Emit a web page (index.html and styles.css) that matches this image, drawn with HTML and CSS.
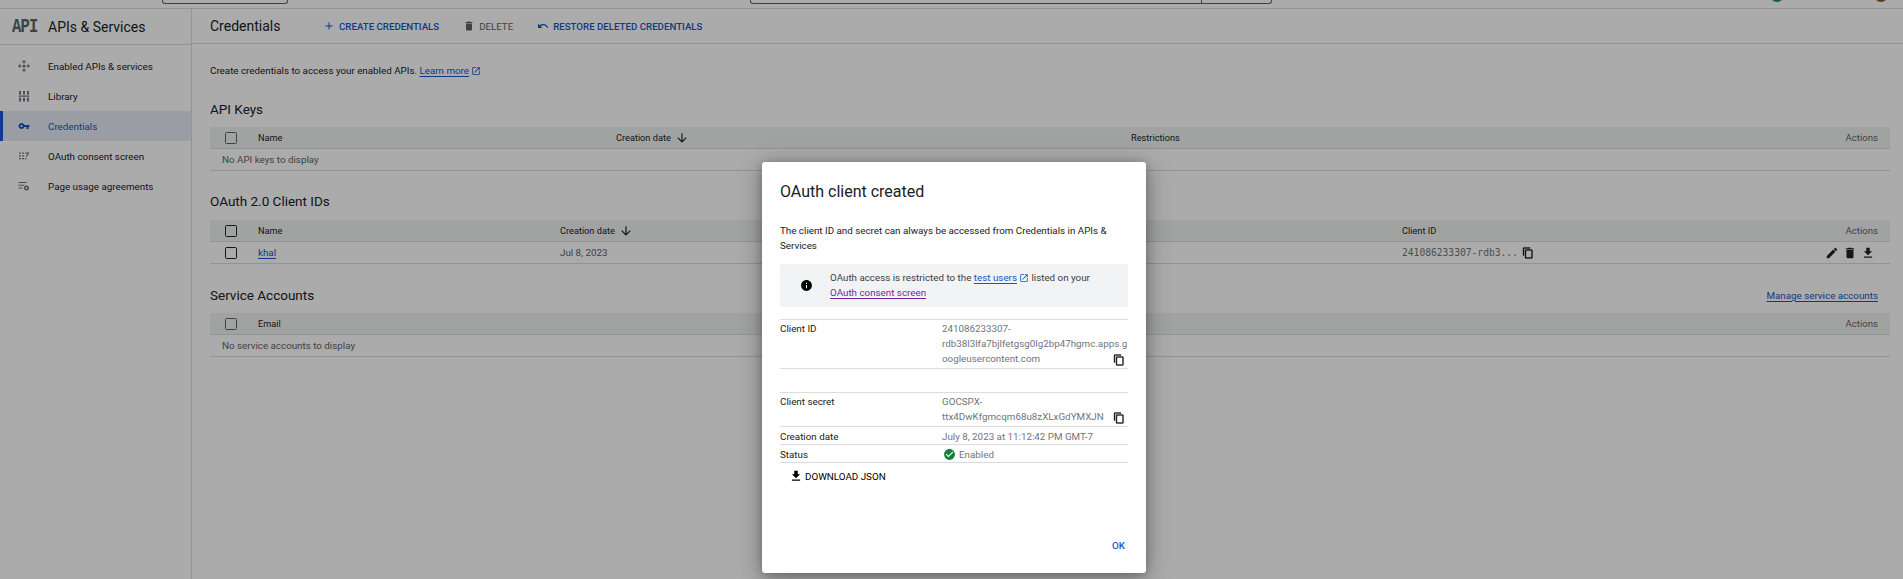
FILE: index.html
```html
<!DOCTYPE html>
<html lang="en">
<head>
<meta charset="utf-8">
<title>Credentials – APIs &amp; Services</title>
<link rel="stylesheet" href="styles.css">
</head>
<body>
<svg class="sprite" aria-hidden="true">
  <symbol id="i-plus" viewBox="0 0 24 24"><path d="M19 13h-6v6h-2v-6H5v-2h6V5h2v6h6v2z"/></symbol>
  <symbol id="i-delete" viewBox="0 0 24 24"><path d="M6 19c0 1.1.9 2 2 2h8c1.1 0 2-.9 2-2V7H6v12zM19 4h-3.500l-1-1h-5l-1 1H5v2h14V4z"/></symbol>
  <symbol id="i-undo" viewBox="0 0 24 24"><path d="M12.500 8c-2.650 0-5.050.99-6.900 2.600L2 7v9h9l-3.620-3.620c1.390-1.160 3.160-1.880 5.120-1.880 3.540 0 6.550 2.310 7.600 5.500l2.370-.78C21.080 11.030 17.150 8 12.500 8z"/></symbol>
  <symbol id="i-key" viewBox="0 0 24 24"><path d="M12.650 10C11.830 7.670 9.610 6 7 6c-3.310 0-6 2.690-6 6s2.690 6 6 6c2.610 0 4.830-1.670 5.650-4H17v4h4v-4h2v-4H12.650zM7 14c-1.100 0-2-.9-2-2s.9-2 2-2 2 .9 2 2-.9 2-2 2z"/></symbol>
  <symbol id="i-copy" viewBox="0 0 24 24"><path d="M16 1H4c-1.100 0-2 .9-2 2v14h2V3h12V1zm3 4H8c-1.100 0-2 .9-2 2v14c0 1.100.9 2 2 2h11c1.100 0 2-.9 2-2V7c0-1.100-.9-2-2-2zm0 16H8V7h11v14z"/></symbol>
  <symbol id="i-edit" viewBox="0 0 24 24"><path d="M3 17.250V21h3.750L17.810 9.940l-3.750-3.750L3 17.250zM20.710 7.040c.39-.39.39-1.020 0-1.410l-2.340-2.340c-.39-.39-1.020-.39-1.410 0l-1.830 1.830 3.750 3.750 1.830-1.830z"/></symbol>
  <symbol id="i-download" viewBox="0 0 24 24"><path d="M19 9h-4V3H9v6H5l7 7 7-7zM5 18v2h14v-2H5z"/></symbol>
  <symbol id="i-down" viewBox="0 0 24 24"><path d="M20 12l-1.410-1.410L13 16.170V4h-2v12.170l-5.580-5.590L4 12l8 8 8-8z"/></symbol>
  <symbol id="i-info" viewBox="0 0 24 24"><path d="M12 2C6.480 2 2 6.480 2 12s4.480 10 10 10 10-4.480 10-10S17.520 2 12 2zm1 15h-2v-6h2v6zm0-8h-2V7h2v2z"/></symbol>
  <symbol id="i-check" viewBox="0 0 24 24"><path d="M12 2C6.480 2 2 6.480 2 12s4.480 10 10 10 10-4.480 10-10S17.520 2 12 2zm-2 15l-5-5 1.410-1.410L10 14.170l7.590-7.590L19 8l-9 9z"/></symbol>
  <symbol id="i-open" viewBox="0 0 24 24"><path d="M19 19H5V5h7V3H5c-1.110 0-2 .9-2 2v14c0 1.100.89 2 2 2h14c1.100 0 2-.9 2-2v-7h-2v7zM14 3v2h3.590l-9.830 9.830 1.410 1.410L19 6.410V10h2V3h-7z"/></symbol>
  <symbol id="i-api" viewBox="0 0 24 24"><path d="M12 0l4.500 4.500H13v3a5 5 0 0 0-2 0v-3H7.500zM0 12l4.500-4.500V11h3a5 5 0 0 0 0 2h-3v3.500zM24 12l-4.500 4.500V13h-3a5 5 0 0 0 0-2h3V7.500zM12 24l-4.500-4.500H11v-3a5 5 0 0 0 2 0v3h3.500z"/><circle cx="12" cy="12" r="3"/></symbol>
  <symbol id="i-library" viewBox="0 0 24 24"><path d="M2 2h4v7H2zM10 2h4v7h-4zM18 2h4v7h-4zM1 11h22v2.500H1zM2 15.500h4V23H2zM10 15.500h4V23h-4zM18 15.500h4V23h-4z"/></symbol>
  <symbol id="i-consent" viewBox="0 0 24 24"><path d="M2 5h4v2.500H2zM8 5h4v2.500H8zM2 10.500h4V13H2zM8 10.500h4V13H8zM2 16h4v2.500H2zM8 16h4v2.500H8zM14 5h9l-5.500 9-1.800-1.800 3.600-5.200H14zM13.500 17.500l1.800-1.800 1.700 1.700-1.700 1.800z"/></symbol>
  <symbol id="i-usage" viewBox="0 0 24 24"><path d="M1 4h16v2.200H1zM1 9.500h12v2.200H1zM1 15h8v2.200H1z"/><path fill-rule="evenodd" d="M17 11a5 5 0 1 0 0 10 5 5 0 0 0 0-10zm0 3a2 2 0 1 1 0 4 2 2 0 0 1 0-4z"/></symbol>
</svg>

<div class="page">
  <div class="browser-strip">
    <span class="strip-box strip-box-small"></span>
    <span class="strip-box strip-box-wide"><span class="strip-divider"></span></span>
    <span class="strip-spacer"></span>
    <span class="strip-dot strip-dot-green"></span>
    <span class="strip-dot strip-dot-brown"></span>
  </div>

  <div class="shell">
    <aside class="sidebar">
      <div class="side-head">
        <span class="api-logo">API</span>
        <span class="side-title">APIs &amp; Services</span>
      </div>
      <nav class="side-nav">
        <a class="nav-item"><svg class="nav-icon"><use href="#i-api"/></svg>Enabled APIs &amp; services</a>
        <a class="nav-item"><svg class="nav-icon"><use href="#i-library"/></svg>Library</a>
        <a class="nav-item is-active"><svg class="nav-icon"><use href="#i-key"/></svg>Credentials</a>
        <a class="nav-item"><svg class="nav-icon"><use href="#i-consent"/></svg>OAuth consent screen</a>
        <a class="nav-item"><svg class="nav-icon"><use href="#i-usage"/></svg>Page usage agreements</a>
      </nav>
    </aside>

    <main class="main">
      <header class="toolbar">
        <h1 class="page-title">Credentials</h1>
        <span class="tool tool-create"><svg class="tool-icon"><use href="#i-plus"/></svg>CREATE CREDENTIALS</span>
        <span class="tool tool-delete"><svg class="tool-icon"><use href="#i-delete"/></svg>DELETE</span>
        <span class="tool"><svg class="tool-icon"><use href="#i-undo"/></svg>RESTORE DELETED CREDENTIALS</span>
      </header>

      <div class="content">
        <p class="intro">Create credentials to access your enabled APIs. <a class="link">Learn more</a><svg class="open-icon"><use href="#i-open"/></svg></p>

        <section class="block block-keys">
          <h2 class="block-title">API Keys</h2>
          <div class="row row-head cols-keys">
            <span class="check"></span><span>Name</span>
            <span class="sort">Creation date<svg class="sort-icon"><use href="#i-down"/></svg></span>
            <span>Restrictions</span><span class="actions-label">Actions</span>
          </div>
          <div class="row row-empty">No API keys to display</div>
        </section>

        <section class="block block-oauth">
          <h2 class="block-title">OAuth 2.0 Client IDs</h2>
          <div class="row row-head cols-oauth">
            <span class="check check-dark"></span><span>Name</span>
            <span class="sort">Creation date<svg class="sort-icon"><use href="#i-down"/></svg></span>
            <span>Client ID</span><span class="actions-label">Actions</span>
          </div>
          <div class="row cols-oauth">
            <span class="check check-dark"></span><a class="link">khal</a>
            <span class="muted">Jul 8, 2023</span>
            <span class="client-id"><span class="mono">241086233307-rdb3...</span><svg class="copy-icon"><use href="#i-copy"/></svg></span>
            <span class="row-actions">
              <svg class="act-icon"><use href="#i-edit"/></svg>
              <svg class="act-icon"><use href="#i-delete"/></svg>
              <svg class="act-icon"><use href="#i-download"/></svg>
            </span>
          </div>
        </section>

        <section class="block block-service">
          <div class="block-head">
            <h2 class="block-title">Service Accounts</h2>
            <a class="link">Manage service accounts</a>
          </div>
          <div class="row row-head cols-service">
            <span class="check"></span><span>Email</span><span class="actions-label">Actions</span>
          </div>
          <div class="row row-empty">No service accounts to display</div>
        </section>
      </div>
    </main>
  </div>

  <div class="scrim">
    <div class="dialog" role="dialog">
      <h2 class="dialog-title">OAuth client created</h2>
      <p class="dialog-text">The client ID and secret can always be accessed from Credentials in APIs &amp; Services</p>
      <div class="notice">
        <svg class="notice-icon"><use href="#i-info"/></svg>
        <p class="notice-text">OAuth access is restricted to the <a class="link">test users</a><svg class="open-icon"><use href="#i-open"/></svg> listed on your <a class="link link-visited">OAuth consent screen</a></p>
      </div>
      <dl class="facts">
        <div class="fact fact-id">
          <dt>Client ID</dt>
          <dd class="break">241086233307-rdb38l3lfa7bjlfetgsg0lg2bp47hgmc.apps.googleusercontent.com</dd>
          <svg class="fact-copy"><use href="#i-copy"/></svg>
        </div>
        <div class="fact fact-secret">
          <dt>Client secret</dt>
          <dd>GOCSPX-<br>ttx4DwKfgmcqm68u8zXLxGdYMXJN</dd>
          <svg class="fact-copy"><use href="#i-copy"/></svg>
        </div>
        <div class="fact">
          <dt>Creation date</dt>
          <dd>July 8, 2023 at 11:12:42 PM GMT-7</dd>
        </div>
        <div class="fact">
          <dt>Status</dt>
          <dd class="status"><svg class="status-icon"><use href="#i-check"/></svg>Enabled</dd>
        </div>
      </dl>
      <div class="download"><svg class="download-icon"><use href="#i-download"/></svg>DOWNLOAD JSON</div>
      <div class="dialog-foot"><span class="ok">OK</span></div>
    </div>
  </div>
</div>
</body>
</html>
```
FILE: styles.css
```css
* { box-sizing: border-box; }
html, body { margin: 0; height: 100%; overflow: hidden; }
body { background: #fff; color: #202124; font-family: Roboto, "Liberation Sans", sans-serif; font-size: 9.8px; }
.sprite { display: none; }
svg { fill: currentColor; flex: none; display: block; }

.page { position: relative; height: 579px; display: flex; flex-direction: column; }

.browser-strip { height: 9px; flex: none; display: flex; align-items: flex-start; border-bottom: 1px solid #dadce0; overflow: hidden; padding-left: 162px; }
.strip-box { display: block; height: 4px; border: 1px solid #5f6368; border-top: 0; border-radius: 0 0 3px 3px; background: #fff; }
.strip-box-small { width: 126px; }
.strip-box-wide { width: 522px; margin-left: 462px; display: flex; justify-content: flex-end; padding-right: 69px; }
.strip-divider { width: 1px; background: #5f6368; }
.strip-spacer { flex: 1; }
.strip-dot { width: 14px; height: 14px; border-radius: 50%; margin-top: -12px; }
.strip-dot-green { background: #fff; border: 2px solid #1e8e6e; margin-right: 90px; }
.strip-dot-brown { background: #8a5a2b; margin-right: 15px; }

.shell { flex: 1; display: flex; min-height: 0; }

.sidebar { width: 192px; flex: none; border-right: 1px solid #dadce0; }
.side-head { height: 36px; display: flex; align-items: center; border-bottom: 1px solid #dadce0; padding-left: 12px; }
.api-logo { width: 36px; font-family: "Liberation Mono", monospace; font-weight: 700; font-size: 15.500px; transform: scaleY(1.25); letter-spacing: -.8px; color: #5f6368; }
.side-title { font-size: 14px; color: #202124; }
.side-nav { padding-top: 6px; display: flex; flex-direction: column; }
.nav-item { height: 30px; display: flex; align-items: center; padding-left: 18px; gap: 18px; color: #202124; }
.nav-icon { width: 12px; height: 12px; color: #70757a; }
.is-active { background: #e8eaf6; color: #1a56c4; box-shadow: inset 3px 0 0 #1a56d8; }
.is-active .nav-icon { color: #1a56c4; }

.main { flex: 1; min-width: 0; }
.toolbar { height: 35px; display: flex; align-items: center; border-bottom: 1px solid #dadce0; padding-left: 18px; }
.page-title { margin: 0 44px 0 0; font-size: 14px; font-weight: 400; color: #202124; width: 69px; white-space: nowrap; }
.tool { display: flex; align-items: center; gap: 4px; font-size: 9.700px; font-weight: 500; color: #1a56c4; margin-right: 24px; }
.tool-icon { width: 12px; height: 12px; }
.tool-delete { color: #5f6368; font-weight: 400; }

.content { padding: 0 13px 0 18px; }
.intro { margin: 20px 0 0; height: 13px; display: flex; align-items: center; white-space: pre; }
.link { color: #1a56c4; text-decoration: underline; text-underline-offset: 2px; }
.link-visited { color: #7b1fa2; white-space: nowrap; }
.open-icon { display: inline-block; width: 10px; height: 10px; margin-left: 2px; color: #1a56c4; vertical-align: -1.500px; }

.block-title { margin: 0; font-size: 13.500px; font-weight: 400; color: #202124; line-height: 16px; }
.block-keys { margin-top: 24px; }
.block-oauth { margin-top: 22px; }
.block-service { margin-top: 23px; }
.block-keys .block-title { margin-bottom: 10px; }
.block-oauth .block-title { margin-bottom: 11px; }
.block-head { display: flex; justify-content: space-between; align-items: center; padding-right: 12px; margin-bottom: 10px; height: 16px; }

.row { height: 22px; display: grid; align-items: center; border-bottom: 1px solid #dadce0; padding-right: 12px; color: #202124; }
.row-head { background: #f1f3f4; font-size: 9.200px; }
.row-empty { display: flex; padding-left: 12px; color: #5f6368; }
.cols-keys { grid-template-columns: 48px 358px 515px 1fr 60px; }
.cols-oauth { grid-template-columns: 48px 302px 842px 1fr 60px; }
.cols-service { grid-template-columns: 48px 1fr 60px; }
.check { display: block; width: 12px; height: 12px; margin-left: 15px; border: 1.500px solid #5f6368; border-radius: 1.500px; }
.check-dark { border-color: #202124; }
.sort { display: flex; align-items: center; gap: 4px; justify-self: start; }
.sort-icon { width: 14px; height: 14px; color: #202124; }
.actions-label { text-align: right; color: #5f6368; font-size: 9.600px; }
.muted { color: #5f6368; justify-self: start; }
.client-id { display: flex; align-items: center; gap: 4px; }
.mono { font-family: "DejaVu Sans Mono", monospace; font-size: 9.650px; color: #70757a; }
.copy-icon { width: 12px; height: 12px; color: #202124; stroke: currentColor; stroke-width: .8; }
.row-actions { display: flex; justify-content: flex-end; gap: 4px; margin-right: 3px; }
.act-icon { width: 14px; height: 14px; color: #202124; }

.scrim { position: absolute; inset: 0; background: rgba(0, 0, 0, .33); }
.dialog { position: absolute; left: 762px; top: 162px; width: 384px; height: 411px; background: #fff; border-radius: 3px; padding: 0 18px; box-shadow: 0 4px 24px rgba(0,0,0,.35), 0 2px 8px rgba(0,0,0,.2); display: flex; flex-direction: column; }
.dialog-title { margin: 18px 0 0; font-size: 16px; font-weight: 400; line-height: 24px; color: #202124; }
.dialog-text { margin: 19px 0 0; line-height: 15px; color: #202124; }
.notice { margin-top: 11px; height: 43px; flex: none; background: #f1f3f4; border-radius: 3px; display: flex; align-items: center; }
.notice-icon { width: 13px; height: 13px; margin-left: 20px; margin-right: 17px; color: #000; }
.notice-text { margin: 0; line-height: 14.500px; color: #3c4043; max-width: 270px; }
.facts { margin: 12px 0 0; border-bottom: 1px solid #dadce0; }
.fact { position: relative; display: grid; grid-template-columns: 162px 1fr; border-top: 1px solid #dadce0; height: 18px; align-items: start; line-height: 15px; padding-top: 2px; }
.fact dt { color: #202124; }
.fact dd { margin: 0; color: #70757a; }
.fact-id { height: 50px; padding-top: 1px; margin-bottom: 23px; border-bottom: 1px solid #dadce0; }
.fact-secret { height: 34px; padding-top: 1px; }
.break { overflow-wrap: anywhere; }
.fact-copy { position: absolute; right: 3px; bottom: 2px; width: 12px; height: 12px; color: #202124; stroke: currentColor; stroke-width: .8; }
.status { display: flex; align-items: center; gap: 3px; }
.status-icon { width: 13px; height: 13px; color: #188038; margin-left: 1px; }
.download { margin-top: 5px; height: 16px; display: flex; align-items: center; gap: 2px; padding-left: 9px; color: #000; }
.download-icon { width: 14px; height: 14px; }
.dialog-foot { margin-top: auto; padding-bottom: 20px; display: flex; justify-content: flex-end; padding-right: 3px; }
.ok { font-weight: 500; color: #1a56c4; line-height: 14px; }
```
